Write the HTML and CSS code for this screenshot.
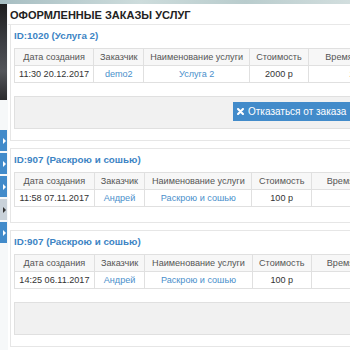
FILE: index.html
```html
<!DOCTYPE html>
<html lang="ru">
<head>
    <meta charset="UTF-8">
    <title>Оформленные заказы услуг</title>
    <link rel="stylesheet" href="styles.css">
</head>
<body>
    <div class="topbar"></div>
    <div class="layout">
        <aside class="side">
            <div class="avatar"></div>
            <div class="tabs">
                <span class="tab"><i class="arrow"></i></span>
                <span class="tab"><i class="arrow"></i></span>
                <span class="tab"><i class="arrow"></i></span>
                <span class="tab tab-active"><i class="arrow"></i></span>
                <span class="tab"><i class="arrow"></i></span>
            </div>
        </aside>

        <main class="content">
            <h2 class="title">Оформленные заказы услуг</h2>

            <div class="order">
                <h3 class="order-id">ID:1020 (Услуга 2)</h3>
                <table class="order-table">
                    <tr>
                        <th class="c-date">Дата создания</th>
                        <th class="c-client">Заказчик</th>
                        <th class="c-name">Наименование услуги</th>
                        <th class="c-cost">Стоимость</th>
                        <th class="c-time">Время выполнения</th>
                    </tr>
                    <tr>
                        <td>11:30 20.12.2017</td>
                        <td><a href="#">demo2</a></td>
                        <td><a href="#">Услуга 2</a></td>
                        <td>2000 р</td>
                        <td>20 дней</td>
                    </tr>
                </table>
                <div class="well">
                    <button class="btn-cancel">
                        <svg width="7" height="7" viewBox="0 0 10 10"><path d="M1.5 1.5 L8.5 8.5 M8.5 1.5 L1.5 8.5" stroke="#fff" stroke-width="3" stroke-linecap="round"/></svg>
                        Отказаться от заказа
                    </button>
                </div>
            </div>

            <div class="order order-short">
                <h3 class="order-id">ID:907 (Раскрою и сошью)</h3>
                <table class="order-table wide">
                    <tr>
                        <th class="c-date">Дата создания</th>
                        <th class="c-client">Заказчик</th>
                        <th class="c-name">Наименование услуги</th>
                        <th class="c-cost">Стоимость</th>
                        <th class="c-time">Время выполнения</th>
                    </tr>
                    <tr>
                        <td>11:58 07.11.2017</td>
                        <td><a href="#">Андрей</a></td>
                        <td><a href="#">Раскрою и сошью</a></td>
                        <td>100 р</td>
                        <td>10 дней</td>
                    </tr>
                </table>
            </div>

            <div class="order">
                <h3 class="order-id">ID:907 (Раскрою и сошью)</h3>
                <table class="order-table wide">
                    <tr>
                        <th class="c-date">Дата создания</th>
                        <th class="c-client">Заказчик</th>
                        <th class="c-name">Наименование услуги</th>
                        <th class="c-cost">Стоимость</th>
                        <th class="c-time">Время выполнения</th>
                    </tr>
                    <tr>
                        <td>14:25 06.11.2017</td>
                        <td><a href="#">Андрей</a></td>
                        <td><a href="#">Раскрою и сошью</a></td>
                        <td>100 р</td>
                        <td>10 дней</td>
                    </tr>
                </table>
                <div class="well"></div>
            </div>
        </main>
    </div>
</body>
</html>
```

FILE: styles.css
```css
body {
    margin: 0;
    width: 350px;
    height: 350px;
    overflow: hidden;
    background-color: #f6f8f9;
    font-family: "Liberation Sans", Arial, sans-serif;
    color: #333;
}
.topbar {
    height: 4px;
    background: linear-gradient(90deg, #a7bec2, #cddcdc 40%, #b9cccd 70%, #d2dede);
}
.layout {
    display: flex;
}
.side {
    width: 8px;
    flex-shrink: 0;
}
.avatar {
    width: 7px;
    height: 96px;
    background: linear-gradient(180deg, #1e1e1e, #3d3f44 40%, #53555a 70%, #2b2b2d);
}
.tabs {
    margin-top: 30px;
    display: flex;
    flex-direction: column;
    gap: 2px;
}
.tab {
    width: 7px;
    height: 21px;
    background-color: #428bca;
    display: flex;
    align-items: center;
    justify-content: flex-end;
}
.tab-active {
    background-color: #c9d2da;
}
.arrow {
    width: 0;
    height: 0;
    border-top: 3px solid transparent;
    border-bottom: 3px solid transparent;
    border-left: 3px solid #fff;
    margin-right: 1px;
}
.tab-active .arrow {
    border-left-color: #333;
}
.content {
    width: 420px;
    flex-shrink: 0;
    background-color: #fff;
}
.title {
    margin: 0;
    padding: 0 2px;
    height: 20px;
    line-height: 23px;
    font-size: 11px;
    font-weight: bold;
    text-transform: uppercase;
    color: #222;
    border-bottom: 1px solid #e8e8e8;
}
.order {
    margin: 0 0 7px 2px;
    border: 1px solid #e6e6e6;
    border-top: none;
    padding: 3px 3px 0;
}
.order + .order {
    border-top: 1px solid #e6e6e6;
}
.order-id {
    margin: 0 0 4px;
    font-size: 9.8px;
    line-height: 16px;
    font-weight: bold;
    color: #3c84c4;
}
.order-table {
    border-collapse: collapse;
    font-size: 9.1px;
    text-align: center;
    margin-bottom: 13px;
}
.order-table th,
.order-table td {
    border: 1px solid #e0e0e0;
    height: 16px;
    padding: 0 4px;
    white-space: nowrap;
}
.order-table th {
    font-weight: normal;
    color: #555;
    background-color: #f7f7f7;
}
.order-table a {
    color: #4a8fcb;
    text-decoration: none;
}
.c-date { width: 70px; }
.c-client { width: 42px; }
.c-name { width: 97px; }
.c-cost { width: 51px; }
.c-time { width: 110px; }
.wide .c-date { width: 71px; }
.wide .c-client { width: 43px; }
.wide .c-name { width: 100px; }
.wide .c-cost { width: 52px; }
.order-short {
    padding-bottom: 2px;
}
.well {
    height: 22px;
    margin-bottom: 11px;
    padding: 5px 0 4px 218px;
    background-color: #f1f1f1;
    border: 1px solid #e0e0e0;
}
.btn-cancel {
    height: 19px;
    padding: 0 8px 0 4px;
    border: none;
    background-color: #428bca;
    color: #fff;
    font-family: "Liberation Sans", Arial, sans-serif;
    font-size: 10px;
    white-space: nowrap;
    display: flex;
    align-items: center;
    gap: 4px;
}
```
